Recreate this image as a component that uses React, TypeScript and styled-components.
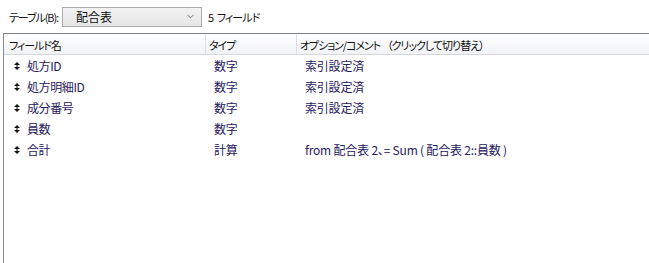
import styled, { createGlobalStyle } from "styled-components";

const FONT = `"Noto Sans CJK JP", "Noto Sans", "Liberation Sans", sans-serif`;

type Field = {
  name: string;
  type: string;
  option: string;
};

const FIELDS: Field[] = [
  { name: "処方ID", type: "数字", option: "索引設定済" },
  { name: "処方明細ID", type: "数字", option: "索引設定済" },
  { name: "成分番号", type: "数字", option: "索引設定済" },
  { name: "員数", type: "数字", option: "" },
  { name: "合計", type: "計算", option: "from 配合表 2、= Sum ( 配合表 2::員数 )" },
];

const GlobalStyle = createGlobalStyle`
  html, body {
    margin: 0;
    padding: 0;
    background: #ffffff;
  }
  body {
    width: 649px;
    height: 263px;
    overflow: hidden;
    font-family: ${FONT};
    font-size: 12px;
    font-feature-settings: "palt";
  }
`;

function MoveHandle() {
  return (
    <svg width="6" height="8" viewBox="0 0 6 8">
      <path d="M3 0 L6 3 L0 3 Z" fill="#111" />
      <path d="M3 8 L6 5 L0 5 Z" fill="#111" />
      <rect x="2.5" y="3" width="1" height="2" fill="#111" />
    </svg>
  );
}

function Chevron() {
  return (
    <svg width="7" height="5" viewBox="0 0 7 5">
      <path d="M0.5 0.8 L3.5 3.8 L6.5 0.8" fill="none" stroke="#777" strokeWidth="1" />
    </svg>
  );
}

export default function App() {
  return (
    <>
      <GlobalStyle />
      <Page>
        <Toolbar>
          <Label>テーブル(B):</Label>
          <Select>
            <SelectText>配合表</SelectText>
            <Chevron />
          </Select>
          <Count>5 フィールド</Count>
        </Toolbar>
        <Table>
          <Header>
            <HeadCell>フィールド名</HeadCell>
            <HeadCell $divider>タイプ</HeadCell>
            <HeadCell $divider>
              オプション/コメント<Hint>（クリックして切り替え）</Hint>
            </HeadCell>
          </Header>
          {FIELDS.map((f) => (
            <Row key={f.name}>
              <NameCell>
                <Handle>
                  <MoveHandle />
                </Handle>
                {f.name}
              </NameCell>
              <Cell>{f.type}</Cell>
              <Cell>{f.option}</Cell>
            </Row>
          ))}
        </Table>
      </Page>
    </>
  );
}

const Page = styled.div`
  display: flex;
  flex-direction: column;
  width: 649px;
  height: 263px;
`;

const Toolbar = styled.div`
  display: flex;
  align-items: center;
  height: 33px;
  padding: 0 0 0 9px;
  box-sizing: border-box;
  color: #111;
`;

const Label = styled.span`
  font-size: 11px;
  line-height: 16px;
  letter-spacing: -1.1px;
`;

const Select = styled.div`
  display: flex;
  align-items: center;
  justify-content: space-between;
  box-sizing: border-box;
  width: 140px;
  height: 20px;
  margin-left: 4px;
  padding: 0 7px 0 13px;
  border: 1px solid #acacac;
  background: linear-gradient(#f2f2f2, #e6e6e6);
`;

const SelectText = styled.span`
  font-size: 12px;
  line-height: 16px;
  color: #111;
`;

const Count = styled.span`
  margin-left: 6px;
  font-size: 11px;
  line-height: 16px;
  letter-spacing: -0.9px;
  word-spacing: 2px;
`;

const Table = styled.div`
  flex: 1;
  margin-left: 3px;
  border-left: 1px solid #8b8b95;
  border-top: 1px solid #7b7f8a;
`;

const Header = styled.div`
  display: grid;
  grid-template-columns: 201px 91px 1fr;
  height: 21px;
  box-sizing: border-box;
  padding-top: 1px;
  border-bottom: 1px solid #d5d7dc;
  background: linear-gradient(#ffffff, #f1f2f5);
`;

const HeadCell = styled.div<{ $divider?: boolean }>`
  display: flex;
  align-items: center;
  padding-left: ${({ $divider }) => ($divider ? "3px" : "5px")};
  border-left: ${({ $divider }) => ($divider ? "1px solid #dcdde2" : "none")};
  font-size: 11px;
  line-height: 16px;
  letter-spacing: -1.1px;
  color: #111;
  white-space: nowrap;
`;

const Hint = styled.span`
  margin-left: 7px;
  letter-spacing: -1px;
`;

const Row = styled.div`
  display: grid;
  grid-template-columns: 201px 91px 1fr;
  height: 21px;
  align-items: center;
  padding-top: 1px;
  box-sizing: border-box;
  color: #1f2060;
  font-size: 12px;
  line-height: 16px;
`;

const NameCell = styled.div`
  display: flex;
  align-items: center;
  padding-left: 10px;
  white-space: nowrap;
  letter-spacing: -0.4px;
`;

const Handle = styled.span`
  display: flex;
  width: 13px;
`;

const Cell = styled.div`
  padding-left: 9px;
  white-space: nowrap;
  letter-spacing: -0.2px;
`;
